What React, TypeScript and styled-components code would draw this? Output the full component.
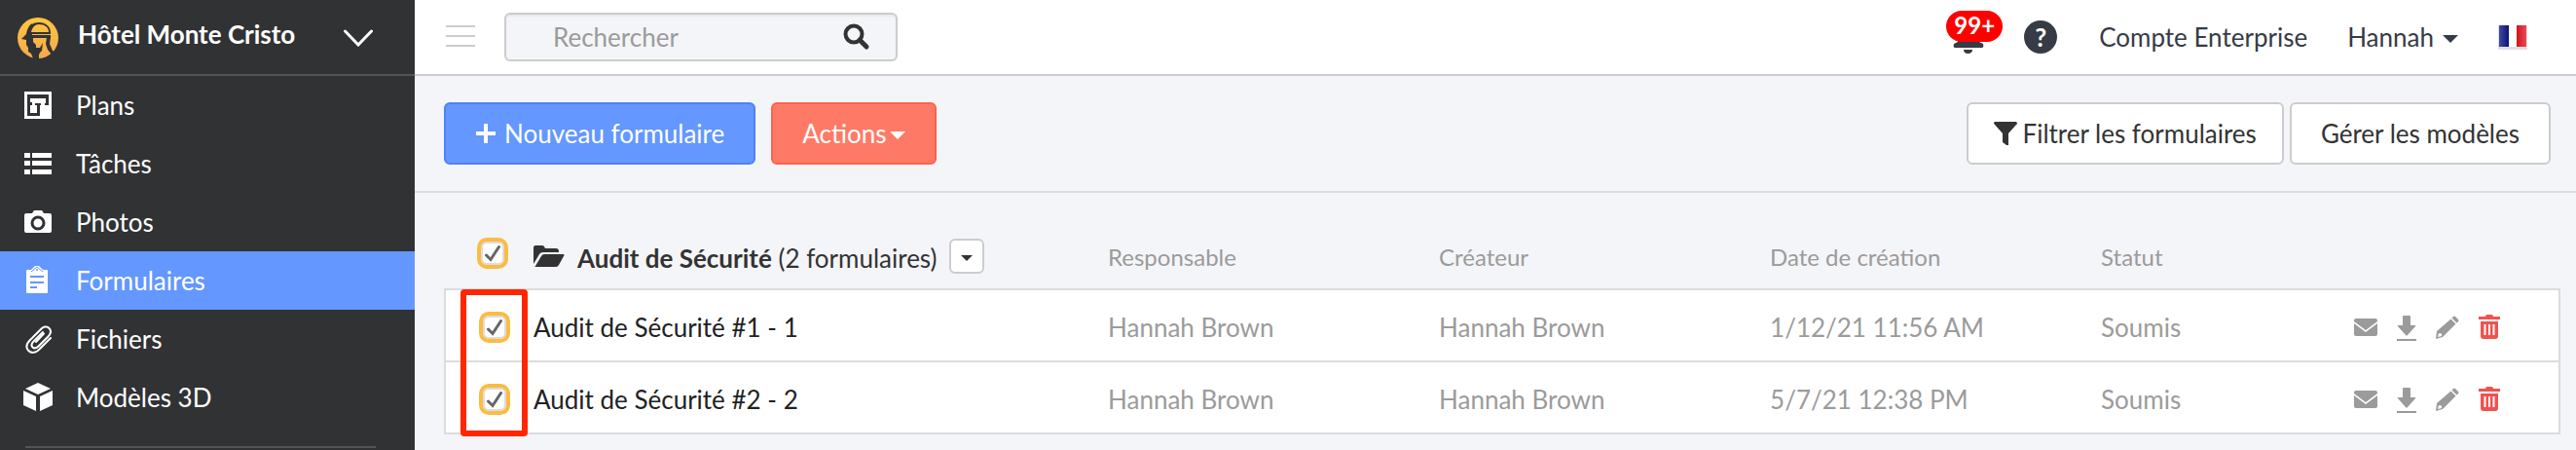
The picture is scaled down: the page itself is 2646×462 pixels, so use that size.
import React, { useState } from "react";
import styled, { createGlobalStyle } from "styled-components";

const color = {
  sidebar: "#313234",
  sidebarLine: "#525355",
  blue: "#6497ff",
  blueEdge: "#4c83f6",
  coral: "#ff7a66",
  coralEdge: "#ff624c",
  page: "#f4f5f8",
  line: "#dcdcdd",
  edge: "#cccccc",
  muted: "#9b9b9b",
  ink: "#333333",
  slate: "#363b45",
  amber: "#fbbc42",
  danger: "#ef5350",
};

const GlobalStyle = createGlobalStyle`
  * { box-sizing: border-box; }
  body { margin: 0; background: ${color.page}; }
  body, button, input { font-family: Lato, "Liberation Sans", sans-serif; font-size: 26px; }
  button { cursor: pointer; }
  svg { display: block; flex: none; }
`;

const Page = styled.div`
  display: grid;
  grid-template-columns: 426px minmax(0, 1fr);
  min-height: 100vh;
  color: ${color.ink};
`;

const Sidebar = styled.aside`
  background: ${color.sidebar};
  color: #fff;
`;

const ProjectButton = styled.button`
  display: flex;
  align-items: center;
  width: 100%;
  height: 78px;
  padding: 2px 43px 0 18px;
  border: 0;
  border-bottom: 2px solid ${color.sidebarLine};
  background: none;
  color: #fff;
  font-weight: 700;
`;

const ProjectName = styled.span`
  flex: 1;
  padding: 0 0 8px 20px;
  text-align: left;
`;

const NavLink = styled.a<{ $active?: boolean }>`
  display: flex;
  align-items: center;
  gap: 24px;
  height: 60px;
  padding-left: 24px;
  background: ${(p) => (p.$active ? color.blue : "transparent")};
  color: #fff;
  text-decoration: none;
`;

const NavDivider = styled.hr`
  margin: 20px 40px 0 26px;
  border: 0;
  border-top: 2px solid ${color.sidebarLine};
`;

const TopBar = styled.header`
  display: flex;
  align-items: center;
  height: 78px;
  padding: 0 50px 0 32px;
  border-bottom: 2px solid ${color.edge};
  background: #fff;
  color: ${color.slate};
`;

const PlainButton = styled.button`
  display: flex;
  align-items: center;
  gap: 9px;
  padding: 0;
  border: 0;
  background: none;
  color: inherit;
`;

const SearchBox = styled.form`
  display: flex;
  align-items: center;
  width: 404px;
  height: 50px;
  margin: 0 auto 0 30px;
  padding: 0 26px 0 48px;
  border: 2px solid ${color.edge};
  border-radius: 6px;
  background: ${color.page};
  box-shadow: inset 0 2px 2px rgba(0, 0, 0, 0.05);
  color: ${color.ink};
`;

const SearchInput = styled.input`
  flex: 1;
  min-width: 0;
  padding: 0;
  border: 0;
  outline: 0;
  background: none;
  &::placeholder { color: ${color.muted}; opacity: 1; }
`;

const BellButton = styled(PlainButton)`
  position: relative;
  margin-right: 41px;
`;

const Badge = styled.span`
  position: absolute;
  top: -10px;
  left: -7px;
  width: 58px;
  height: 32px;
  border-radius: 16px;
  background: #ff0000;
  color: #fff;
  font-size: 24px;
  font-weight: 700;
  line-height: 30px;
  text-align: center;
`;

const HelpButton = styled(PlainButton)`
  justify-content: center;
  width: 34px;
  height: 34px;
  border-radius: 50%;
  background: ${color.slate};
  color: #fff;
  font-weight: 700;
`;

const AccountLink = styled.a`
  margin: 0 41px 0 43px;
  color: inherit;
  text-decoration: none;
`;

const FlagButton = styled(PlainButton)`
  margin-left: 41px;
`;

const Toolbar = styled.div`
  display: flex;
  align-items: center;
  height: 120px;
  padding: 0 26px 0 30px;
  border-bottom: 2px solid ${color.line};
`;

const tones = {
  blue: [color.blue, color.blueEdge, "#fff"],
  coral: [color.coral, color.coralEdge, "#fff"],
  white: ["#fff", color.edge, color.ink],
};

const Button = styled.button<{ $tone: keyof typeof tones; $pad?: number; $gap?: number }>`
  display: flex;
  align-items: center;
  gap: ${(p) => p.$gap ?? 6}px;
  height: 64px;
  padding: 0 ${(p) => p.$pad ?? 30}px;
  border: 2px solid ${(p) => tones[p.$tone][1]};
  border-radius: 6px;
  background: ${(p) => tones[p.$tone][0]};
  color: ${(p) => tones[p.$tone][2]};
  white-space: nowrap;
`;

const ButtonGroup = styled.div<{ $gap: number }>`
  display: flex;
  gap: ${(p) => p.$gap}px;
  &:last-child { margin-left: auto; }
`;

const TableArea = styled.section`
  position: relative;
  padding: 0 16px 16px 30px;
`;

const Table = styled.table`
  width: 100%;
  table-layout: fixed;
  border-collapse: separate;
  border-spacing: 0;
`;

const Col = styled.col<{ $w?: string }>`
  width: ${(p) => p.$w ?? "auto"};
`;

const HeadCell = styled.th`
  height: 100px;
  padding: 32px 0 0;
  border-bottom: 2px solid ${color.line};
  color: ${color.muted};
  font-size: 24px;
  font-weight: 400;
  text-align: left;
`;

const HeadCheckCell = styled(HeadCell)`
  padding: 26px 0 0 34px;
`;

const Cell = styled.td`
  height: 74px;
  padding: 4px 0 0;
  border-bottom: 2px solid ${color.line};
  background: #fff;
  color: ${color.muted};
  &:first-child { padding-left: 34px; border-left: 2px solid ${color.line}; }
  &:last-child { border-right: 2px solid ${color.line}; }
`;

const NameCell = styled(Cell)`
  color: #222;
`;

const GroupTitle = styled.div`
  display: flex;
  align-items: center;
  color: ${color.ink};
  font-size: 26px;
  white-space: nowrap;
`;

const GroupName = styled.span`
  padding: 4px 12px 0 13px;
`;

const GroupMenu = styled.button`
  display: flex;
  align-items: center;
  justify-content: center;
  width: 36px;
  height: 36px;
  padding: 0;
  border: 2px solid ${color.edge};
  border-radius: 6px;
  background: #fff;
  color: ${color.ink};
`;

const RowActions = styled.div`
  display: flex;
  align-items: center;
  justify-content: flex-end;
  gap: 20px;
  padding-right: 60px;
  color: ${color.muted};
`;

const DeleteButton = styled(PlainButton)`
  color: ${color.danger};
`;

const CheckLabel = styled.label`
  position: relative;
  display: block;
  width: 32px;
  height: 32px;
`;

const CheckInput = styled.input`
  appearance: none;
  display: block;
  width: 32px;
  height: 32px;
  margin: 0;
  border: 4px solid ${color.amber};
  border-radius: 10px;
  background: #fff;
  box-shadow: inset 0 0 0 2px #dcdcdc;
  & + svg { position: absolute; inset: 0; pointer-events: none; visibility: hidden; }
  &:checked + svg { visibility: visible; }
`;

const Highlight = styled.div`
  position: absolute;
  top: 99px;
  left: 47px;
  width: 69px;
  height: 151px;
  border: 6px solid #ff2600;
  border-radius: 4px;
  pointer-events: none;
`;

const Caret = ({ w = 16, h = 8 }: { w?: number; h?: number }) => (
  <svg width={w} height={h + 4} viewBox={`0 0 ${w} ${h + 4}`} fill="currentColor">
    <path d={`M0 4H${w}L${w / 2} ${h + 4}Z`} />
  </svg>
);

const Logo = () => (
  <svg width="42" height="42" viewBox="0 0 42 42">
    <defs>
      <linearGradient id="logo" gradientUnits="userSpaceOnUse" x1="0" y1="0" x2="0" y2="42">
        <stop offset="0" stopColor="#fdc63f" />
        <stop offset="1" stopColor="#f5a94f" />
      </linearGradient>
    </defs>
    <circle cx="21" cy="21" r="21" fill="url(#logo)" />
    <g fill={color.sidebar}>
      <path d="M4 22L9 17C10 9 15 5 22 5C29 5 34 9 34 16V21H16V25L19 28V32L24 33L22 38V42H16L14 37L11 35V31L9 28V23Z" />
      <path d="M30 20H34L33 27L36 34L38 36L35 38L31 33L29 27Z" />
      <path d="M17 31L23 31L26 26L25 34L21 38Z" />
    </g>
    <path d="M14 15C15 10 18 7 22 7C28 7 32 10 32 15H14Z" fill="url(#logo)" />
    <path d="M15 7C12 10 11 13 11 17M14 18H33" fill="none" stroke={color.sidebar} strokeWidth="2" />
    <path d="M15 17.500H34" stroke="#f9b746" strokeWidth="1" />
  </svg>
);

const PlanIcon = () => (
  <svg width="30" height="30" viewBox="0 0 30 30">
    <rect x="1" y="1" width="28" height="28" fill="#fff" />
    <path d="M4 4H26V15H22V13H23V8H7V12H9V15H7V23H14V15H12V13H18V15H17V26H4Z" fill={color.sidebar} />
  </svg>
);

const ListIcon = () => (
  <svg width="30" height="30" viewBox="0 0 30 30" fill="#fff">
    <path d="M1 4h6v5H1zM9 4h20v5H9zM1 12h6v5H1zM9 12h20v5H9zM1 21h6v5H1zM9 21h20v5H9z" />
  </svg>
);

const CameraIcon = () => (
  <svg width="30" height="30" viewBox="0 0 30 30" fill="none">
    <path d="M3 6H9L11 3H19L21 6H27Q29 6 29 8V24Q29 26 27 26H3Q1 26 1 24V8Q1 6 3 6Z" fill="#fff" />
    <circle cx="15" cy="16" r="6" stroke={color.sidebar} strokeWidth="3" />
  </svg>
);

const ClipboardIcon = () => (
  <svg width="30" height="30" viewBox="0 0 30 30" fill="none">
    <path d="M4 4H8L12 0Q14 -2 16 0L20 4H24Q25 4 25 5V27Q25 28 24 28H4Q3 28 3 27V5Q3 4 4 4Z" fill="#fff" />
    <path d="M7 11H21M7 17H21M7 22H14" stroke={color.blue} strokeWidth="2" />
    <path d="M8 6L14 1L20 6" stroke={color.blue} strokeWidth="1" />
    <circle cx="14" cy="4" r="1" fill={color.blue} />
  </svg>
);

const ClipIcon = () => (
  <svg width="30" height="30" viewBox="0 0 30 30" fill="none" stroke="#fff" strokeWidth="2" strokeLinecap="round">
    <path d="M28 14L17 25C13 30 7 30 4.500 26C2 22.500 4 19 7 16L17 6C20 2.500 24 1 26.500 4C29.500 7 28 10 25 13L15.500 22.500C13.500 24.500 11 25 9.500 23.500C8 22 8.500 19.500 10.500 17.500L20 8" />
    <path d="M21 9.500L13 18" />
  </svg>
);

const CubeIcon = () => (
  <svg width="30" height="30" viewBox="0 0 30 30" fill="#fff">
    <path d="M15 0L28 6L15 12L2 6ZM0 8L13 14V29L0 23ZM30 8L17 14V29L30 23Z" />
  </svg>
);

const MailIcon = () => (
  <svg width="24" height="28" viewBox="0 0 24 28" fill="currentColor">
    <path d="M2 5H22Q24 5 24 7V8L12 17L0 8V7Q0 5 2 5ZM0 10L12 19L24 10V21Q24 23 22 23H2Q0 23 0 21Z" />
  </svg>
);

const DownloadIcon = () => (
  <svg width="20" height="28" viewBox="0 0 20 28" fill="currentColor">
    <path d="M6 3Q6 2 7 2H13Q14 2 14 3V12H19Q20 12 19 13L11 22Q10 23 9 22L1 13Q0 12 1 12H6ZM0 26H20V28H0Z" />
  </svg>
);

const PencilIcon = () => (
  <svg width="24" height="28" viewBox="0 0 24 28" fill="currentColor">
    <path d="M18 3Q19 2 20 3L23 6Q24 7 23 8L21.500 9.500L16.500 4.500ZM15.500 5.500L20.500 10.500L7 24L0 26L1 18ZM3 20L2 24L6 23L6 20.500Z" fillRule="evenodd" />
  </svg>
);

const TrashIcon = () => (
  <svg width="22" height="28" viewBox="0 0 22 28" fill="none">
    <path d="M0 3H7Q7 1 9 1H13Q15 1 15 3H22V6H0ZM2 8H20V23Q20 26 17 26H5Q2 26 2 23Z" fill="currentColor" />
    <path d="M6.500 11V22M11 11V22M15.500 11V22" stroke="#fff" strokeWidth="2" />
  </svg>
);

const FlagIcon = () => (
  <svg width="30" height="28" viewBox="0 0 30 28">
    <defs>
      <linearGradient id="flagBlue" x1="0" y1="0" x2="1" y2="0">
        <stop offset="0" stopColor="#3f4aa0" />
        <stop offset="1" stopColor="#0c1276" />
      </linearGradient>
      <linearGradient id="flagRed" x1="0" y1="0" x2="1" y2="0">
        <stop offset="0" stopColor="#cf1220" />
        <stop offset="1" stopColor="#ec4a52" />
      </linearGradient>
    </defs>
    <rect x="0" y="2" width="30" height="25" rx="1" fill="#e0e0e0" />
    <rect x="1" y="2" width="10" height="22" fill="url(#flagBlue)" />
    <rect x="11" y="2" width="8" height="22" fill="#fff" />
    <rect x="19" y="2" width="10" height="22" fill="url(#flagRed)" />
  </svg>
);

const Check = ({ label }: { label: string }) => {
  const [checked, setChecked] = useState(true);
  return (
    <CheckLabel>
      <CheckInput type="checkbox" aria-label={label} checked={checked} onChange={(e) => setChecked(e.target.checked)} />
      <svg width="32" height="32" viewBox="0 0 32 32" fill="none" stroke="#666" strokeWidth="3" strokeLinecap="round">
        <path d="M9.500 18L14 22.500L22.500 9.500" />
      </svg>
    </CheckLabel>
  );
};

const nav = [
  { label: "Plans", icon: <PlanIcon /> },
  { label: "Tâches", icon: <ListIcon /> },
  { label: "Photos", icon: <CameraIcon /> },
  { label: "Formulaires", icon: <ClipboardIcon />, active: true },
  { label: "Fichiers", icon: <ClipIcon /> },
  { label: "Modèles 3D", icon: <CubeIcon /> },
];

const forms = [
  { name: "Audit de Sécurité #1 - 1", owner: "Hannah Brown", author: "Hannah Brown", date: "1/12/21 11:56 AM", status: "Soumis" },
  { name: "Audit de Sécurité #2 - 2", owner: "Hannah Brown", author: "Hannah Brown", date: "5/7/21 12:38 PM", status: "Soumis" },
];

export default function App() {
  return (
    <>
      <GlobalStyle />
      <Page>
        <Sidebar>
          <ProjectButton>
            <Logo />
            <ProjectName>Hôtel Monte Cristo</ProjectName>
            <svg width="30" height="18" viewBox="0 0 30 18" fill="none" stroke="#fff" strokeWidth="3" strokeLinecap="round">
              <path d="M1.500 2L15 16L28.500 2" />
            </svg>
          </ProjectButton>
          <nav>
            {nav.map((item) => (
              <NavLink key={item.label} href="#" $active={item.active}>
                {item.icon}
                {item.label}
              </NavLink>
            ))}
          </nav>
          <NavDivider />
        </Sidebar>
        <main>
          <TopBar>
            <PlainButton aria-label="Menu">
              <svg width="30" height="24" viewBox="0 0 30 24" fill={color.edge}>
                <path d="M0 0h30v2H0zM0 10h30v2H0zM0 20h30v2H0z" />
              </svg>
            </PlainButton>
            <SearchBox role="search">
              <SearchInput type="text" aria-label="Rechercher" placeholder="Rechercher" />
              <svg width="28" height="28" viewBox="0 0 28 28" fill="none" stroke={color.ink}>
                <circle cx="11" cy="11" r="8.500" strokeWidth="4" />
                <path d="M17 17L24 24" strokeWidth="5" strokeLinecap="round" />
              </svg>
            </SearchBox>
            <BellButton aria-label="Notifications">
              <svg width="32" height="34" viewBox="0 0 32 34" fill="currentColor">
                <path d="M5 22V12C5 6 10 2 16 2S27 6 27 12V22L31 24Q32 28 30 28H2Q0 28 1 24ZM11 30H20Q20 34 15.500 34T11 30Z" />
              </svg>
              <Badge>99+</Badge>
            </BellButton>
            <HelpButton aria-label="Aide">?</HelpButton>
            <AccountLink href="#">Compte Enterprise</AccountLink>
            <PlainButton>
              Hannah
              <Caret />
            </PlainButton>
            <FlagButton aria-label="Français">
              <FlagIcon />
            </FlagButton>
          </TopBar>
          <Toolbar>
            <ButtonGroup $gap={16}>
              <Button $tone="blue" $gap={8}>
                <svg width="22" height="22" viewBox="0 0 22 22" fill="currentColor">
                  <path d="M9 1H13V9H21V13H13V21H9V13H1V9H9Z" />
                </svg>
                Nouveau formulaire
              </Button>
              <Button $tone="coral" $gap={4}>
                Actions
                <Caret />
              </Button>
            </ButtonGroup>
            <ButtonGroup $gap={6}>
              <Button $tone="white" $pad={26}>
                <svg width="24" height="26" viewBox="0 0 24 26" fill="currentColor">
                  <path d="M1 1H23Q25 3 23 4L15 13V25H13L9 22V13L1 4Q-1 2 1 1Z" />
                </svg>
                Filtrer les formulaires
              </Button>
              <Button $tone="white">Gérer les modèles</Button>
            </ButtonGroup>
          </Toolbar>
          <TableArea>
            <Table>
              <colgroup>
                <Col $w="92px" />
                <Col />
                <Col $w="15.64%" />
                <Col $w="15.64%" />
                <Col $w="15.64%" />
                <Col $w="10%" />
                <Col $w="11.71%" />
              </colgroup>
              <thead>
                <tr>
                  <HeadCheckCell>
                    <Check label="Tout sélectionner" />
                  </HeadCheckCell>
                  <HeadCell>
                    <GroupTitle>
                      <svg width="32" height="24" viewBox="0 0 32 24" fill="currentColor">
                        <path d="M0 20V3Q0 1 2 1H9Q11 1 12 4H23Q26 4 26 7V8H10Q7 8 6 10L0 20ZM8 12Q9 10 11 10H31Q32 10 31 12L26 21Q25 23 23 23H2Q1 23 2 22Z" />
                      </svg>
                      <GroupName>
                        <b>Audit de Sécurité</b> (2 formulaires)
                      </GroupName>
                      <GroupMenu aria-label="Options du groupe">
                        <Caret w={12} h={6} />
                      </GroupMenu>
                    </GroupTitle>
                  </HeadCell>
                  <HeadCell>Responsable</HeadCell>
                  <HeadCell>Créateur</HeadCell>
                  <HeadCell>Date de création</HeadCell>
                  <HeadCell>Statut</HeadCell>
                  <HeadCell aria-label="Actions" />
                </tr>
              </thead>
              <tbody>
                {forms.map((f) => (
                  <tr key={f.name}>
                    <Cell>
                      <Check label={f.name} />
                    </Cell>
                    <NameCell>{f.name}</NameCell>
                    <Cell>{f.owner}</Cell>
                    <Cell>{f.author}</Cell>
                    <Cell>{f.date}</Cell>
                    <Cell>{f.status}</Cell>
                    <Cell>
                      <RowActions>
                        <PlainButton aria-label="Envoyer"><MailIcon /></PlainButton>
                        <PlainButton aria-label="Télécharger"><DownloadIcon /></PlainButton>
                        <PlainButton aria-label="Modifier"><PencilIcon /></PlainButton>
                        <DeleteButton aria-label="Supprimer"><TrashIcon /></DeleteButton>
                      </RowActions>
                    </Cell>
                  </tr>
                ))}
              </tbody>
            </Table>
            <Highlight />
          </TableArea>
        </main>
      </Page>
    </>
  );
}
